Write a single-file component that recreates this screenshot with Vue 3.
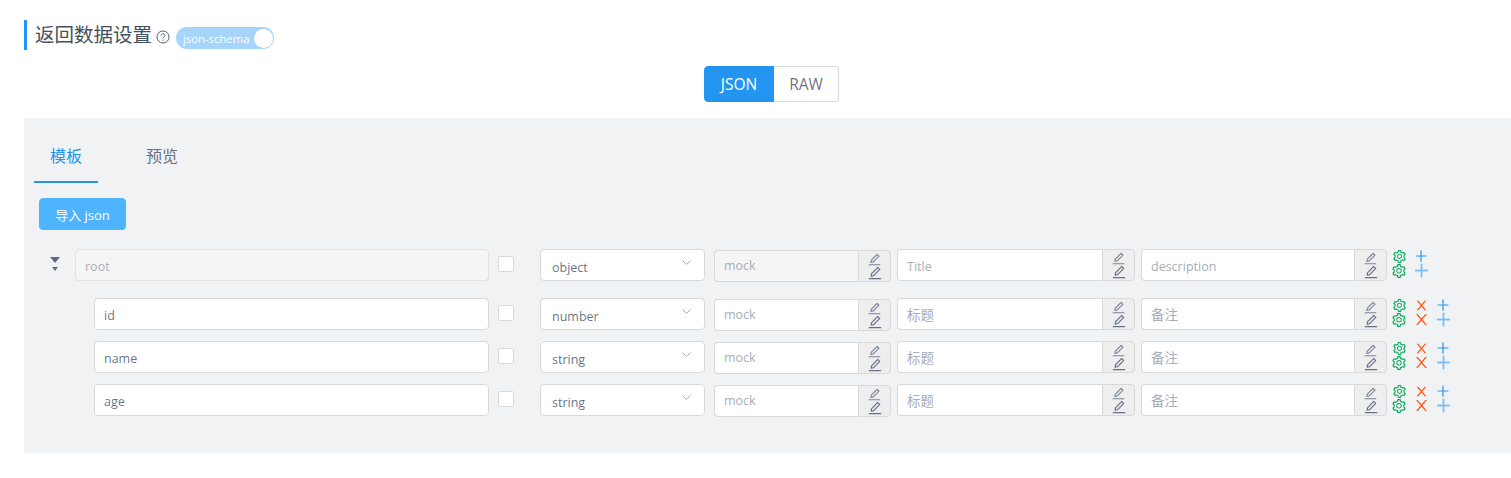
<script setup>
const EDIT = 'M257.7 752c2 0 4-.2 6-.5L431.9 722c2-.4 3.9-1.3 5.3-2.8l423.9-423.9a9.96 9.96 0 0 0 0-14.1L694.9 114.9c-1.9-1.9-4.4-2.9-7.1-2.9s-5.2 1-7.1 2.9L256.8 538.8c-1.5 1.5-2.4 3.3-2.8 5.3l-29.5 168.2a33.5 33.5 0 0 0 9.4 29.8c6.6 6.4 14.9 9.9 23.8 9.9zm67.4-174.4L687.8 215l73.3 73.3-362.7 362.6-88.9 15.7 15.6-89zM880 836H144c-17.7 0-32 14.3-32 32v36c0 4.4 3.6 8 8 8h784c4.4 0 8-3.6 8-8v-36c0-17.7-14.3-32-32-32z';
const GEAR = 'M924.8 625.7l-65.5-56c3.1-19 4.7-38.4 4.7-57.8s-1.6-38.8-4.7-57.8l65.5-56a32.03 32.03 0 0 0 9.3-35.2l-.9-2.6a443.74 443.74 0 0 0-79.7-137.9l-1.8-2.1a32.12 32.12 0 0 0-35.1-9.5l-81.3 28.9c-30-24.6-63.5-44-99.7-57.6l-15.7-85a32.05 32.05 0 0 0-25.8-25.7l-2.7-.5c-52.1-9.4-106.9-9.4-159 0l-2.7.5a32.05 32.05 0 0 0-25.8 25.7l-15.8 85.4a351.86 351.86 0 0 0-99 57.4l-81.9-29.1a32 32 0 0 0-35.1 9.5l-1.8 2.1a446.02 446.02 0 0 0-79.7 137.9l-.9 2.6c-4.5 12.5-.8 26.5 9.3 35.2l66.3 56.6c-3.1 18.8-4.6 38-4.6 57.1 0 19.2 1.5 38.4 4.6 57.1L99 625.5a32.03 32.03 0 0 0-9.3 35.2l.9 2.6c18.1 50.4 44.9 96.9 79.7 137.9l1.8 2.1a32.12 32.12 0 0 0 35.1 9.5l81.9-29.1c29.8 24.5 63.1 43.9 99 57.4l15.8 85.4a32.05 32.05 0 0 0 25.8 25.7l2.7.5a449.4 449.4 0 0 0 159 0l2.7-.5a32.05 32.05 0 0 0 25.8-25.7l15.7-85a350 350 0 0 0 99.7-57.6l81.3 28.9a32 32 0 0 0 35.1-9.5l1.8-2.1c34.8-41.1 61.6-87.5 79.7-137.9l.9-2.6c4.5-12.3.8-26.3-9.3-35zM788.3 465.9c2.5 15.1 3.8 30.6 3.8 46.1s-1.3 31-3.8 46.1l-6.6 40.1 74.7 63.9a370.03 370.03 0 0 1-42.6 73.6L721 702.8l-31.4 25.8c-23.9 19.6-50.5 35-79.3 45.8l-38.1 14.3-17.9 97a377.5 377.5 0 0 1-85 0l-17.9-97.2-37.8-14.5c-28.5-10.8-55-26.2-78.7-45.7l-31.4-25.9-93.4 33.2c-17-22.9-31.2-47.6-42.6-73.6l75.5-64.5-6.5-40c-2.4-14.9-3.7-30.3-3.7-45.5 0-15.3 1.2-30.6 3.7-45.5l6.5-40-75.5-64.5c11.3-26.1 25.6-50.7 42.6-73.6l93.4 33.2 31.4-25.9c23.7-19.5 50.2-34.9 78.7-45.7l37.9-14.3 17.9-97.2c28.1-3.2 56.8-3.2 85 0l17.9 97 38.1 14.3c28.7 10.8 55.4 26.2 79.3 45.8l31.4 25.8 92.8-32.9c17 22.9 31.2 47.6 42.6 73.6L781.8 426l6.5 39.9zM512 326c-97.2 0-176 78.8-176 176s78.8 176 176 176 176-78.8 176-176-78.8-176-176-176zm79.2 255.2A111.6 111.6 0 0 1 512 614c-29.9 0-58-11.7-79.2-32.8A111.6 111.6 0 0 1 400 502c0-29.9 11.7-58 32.8-79.2C454 401.6 482.1 390 512 390c29.9 0 58 11.6 79.2 32.8A111.6 111.6 0 0 1 624 502c0 29.9-11.7 58-32.8 79.2z';
const PLUS = 'M482 152h60q8 0 8 8v704q0 8-8 8h-60q-8 0-8-8V160q0-8 8-8ZM176 474h672q8 0 8 8v60q0 8-8 8H176q-8 0-8-8v-60q0-8 8-8Z';
const CLOSE = 'M563.8 512l262.5-312.9c4.4-5.2.7-13.1-6.1-13.1h-79.8c-4.7 0-9.2 2.1-12.3 5.7L511.6 449.8 295.1 191.7c-3-3.6-7.5-5.7-12.3-5.7H203c-6.8 0-10.5 7.9-6.1 13.1L459.4 512 196.9 824.9A7.95 7.95 0 0 0 203 838h79.8c4.7 0 9.2-2.1 12.3-5.7l216.5-258.1 216.5 258.1c3 3.6 7.5 5.7 12.3 5.7h79.8c6.8 0 10.5-7.9 6.1-13.1L563.8 512z';

const rows = [
  { name: 'id', type: 'number' },
  { name: 'name', type: 'string' },
  { name: 'age', type: 'string' },
];
</script>

<template>
  <div class="page">
    <div class="heading">
      <span class="heading-text">返回数据设置</span>
      <svg class="help" viewBox="0 0 1024 1024" fill="none" stroke="#4d5d6e">
        <circle cx="512" cy="512" r="440" stroke-width="72" />
        <path d="M370 410c0-80 64-130 142-130s142 50 142 126c0 60-40 88-82 116-34 22-60 44-60 92" stroke-width="72" />
        <circle cx="512" cy="738" r="48" fill="#4d5d6e" stroke="none" />
      </svg>
      <div class="switch">
        <span class="switch-label">json-schema</span>
        <span class="switch-knob"></span>
      </div>
    </div>

    <div class="mode-row">
      <div class="mode-group">
        <span class="mode-btn active">JSON</span>
        <span class="mode-btn">RAW</span>
      </div>
    </div>

    <div class="panel">
      <div class="tabs">
        <div class="tab active">模板</div>
        <div class="tab">预览</div>
      </div>
      <button class="import-btn" type="button">导入 json</button>

      <div class="row root-row">
        <div class="name-col root-name">
          <span class="caret">
            <i class="caret-big"></i>
            <i class="caret-small"></i>
          </span>
          <input class="text-input disabled root-input" value="root" disabled />
        </div>
        <div class="check-col"><span class="check"></span></div>
        <div class="select">
          <span>object</span>
          <svg class="chev" viewBox="0 0 10 6"><path d="M.5.5 5 5 9.500.5" /></svg>
        </div>
        <div class="group mock disabled-group">
          <input class="group-input" placeholder="mock" disabled />
          <span class="addon">
            <svg class="pen-a" viewBox="0 0 1024 1024"><path :d="EDIT" /></svg>
            <svg class="pen-b" viewBox="0 0 1024 1024"><path :d="EDIT" /></svg>
          </span>
        </div>
        <div class="group title">
          <input class="group-input" placeholder="Title" />
          <span class="addon">
            <svg class="pen-a" viewBox="0 0 1024 1024"><path :d="EDIT" /></svg>
            <svg class="pen-b" viewBox="0 0 1024 1024"><path :d="EDIT" /></svg>
          </span>
        </div>
        <div class="group desc">
          <input class="group-input" placeholder="description" />
          <span class="addon">
            <svg class="pen-a" viewBox="0 0 1024 1024"><path :d="EDIT" /></svg>
            <svg class="pen-b" viewBox="0 0 1024 1024"><path :d="EDIT" /></svg>
          </span>
        </div>
        <div class="actions">
          <span class="stack gear">
            <svg viewBox="0 0 1024 1024"><path :d="GEAR" /></svg>
            <svg viewBox="0 0 1024 1024"><path :d="GEAR" /></svg>
          </span>
          <span class="stack plus">
            <svg viewBox="0 0 1024 1024"><path :d="PLUS" /></svg>
            <svg viewBox="0 0 1024 1024"><path :d="PLUS" /></svg>
          </span>
        </div>
      </div>

      <div v-for="r in rows" :key="r.name" class="row child-row">
        <div class="name-col child-name">
          <input class="text-input" :value="r.name" />
        </div>
        <div class="check-col"><span class="check"></span></div>
        <div class="select">
          <span>{{ r.type }}</span>
          <svg class="chev" viewBox="0 0 10 6"><path d="M.5.5 5 5 9.500.5" /></svg>
        </div>
        <div class="group mock">
          <input class="group-input" placeholder="mock" />
          <span class="addon">
            <svg class="pen-a" viewBox="0 0 1024 1024"><path :d="EDIT" /></svg>
            <svg class="pen-b" viewBox="0 0 1024 1024"><path :d="EDIT" /></svg>
          </span>
        </div>
        <div class="group title">
          <input class="group-input cjk" placeholder="标题" />
          <span class="addon">
            <svg class="pen-a" viewBox="0 0 1024 1024"><path :d="EDIT" /></svg>
            <svg class="pen-b" viewBox="0 0 1024 1024"><path :d="EDIT" /></svg>
          </span>
        </div>
        <div class="group desc">
          <input class="group-input cjk" placeholder="备注" />
          <span class="addon">
            <svg class="pen-a" viewBox="0 0 1024 1024"><path :d="EDIT" /></svg>
            <svg class="pen-b" viewBox="0 0 1024 1024"><path :d="EDIT" /></svg>
          </span>
        </div>
        <div class="actions">
          <span class="stack gear">
            <svg viewBox="0 0 1024 1024"><path :d="GEAR" /></svg>
            <svg viewBox="0 0 1024 1024"><path :d="GEAR" /></svg>
          </span>
          <span class="stack close">
            <svg viewBox="0 0 1024 1024"><path :d="CLOSE" /></svg>
            <svg viewBox="0 0 1024 1024"><path :d="CLOSE" /></svg>
          </span>
          <span class="stack plus">
            <svg viewBox="0 0 1024 1024"><path :d="PLUS" /></svg>
            <svg viewBox="0 0 1024 1024"><path :d="PLUS" /></svg>
          </span>
        </div>
      </div>
    </div>
  </div>
</template>

<style scoped>
.page {
  height: 478px;
  padding: 20px 0 0 24px;
  box-sizing: border-box;
  background: #fff;
  font-family: "Open Sans", "Noto Sans CJK SC", sans-serif;
  color: rgba(13, 27, 62, 0.65);
  overflow: hidden;
}

.heading {
  display: flex;
  align-items: center;
  height: 30px;
  border-left: 3px solid #2395f1;
  padding-left: 8px;
}
.heading-text {
  font-size: 19.5px;
  color: #44505c;
  line-height: 30px;
}
.help {
  width: 14px;
  height: 14px;
  margin: 4px 6px 0 4px;
}
.switch {
  width: 98px;
  height: 22px;
  margin-top: 6px;
  border-radius: 11px;
  background: #a6d4fa;
  display: flex;
  align-items: center;
  justify-content: space-between;
  padding: 0 1px 0 7px;
  box-sizing: border-box;
}
.switch-label {
  font-size: 11.3px;
  color: #fff;
}
.switch-knob {
  width: 19px;
  height: 19px;
  border-radius: 50%;
  background: #fff;
}

.mode-row {
  display: flex;
  justify-content: center;
  margin-top: 16px;
  padding-right: 16px;
  margin-left: 24px;
}
.mode-group {
  display: flex;
  height: 36px;
}
.mode-btn {
  display: flex;
  align-items: center;
  justify-content: center;
  width: 65px;
  border: 1px solid #d9d9d9;
  border-left: 0;
  border-radius: 0 4px 4px 0;
  box-sizing: border-box;
  font-size: 15.5px;
  color: rgba(13, 27, 62, 0.65);
}
.mode-btn.active {
  width: 70px;
  background: #2395f1;
  border: 1px solid #2395f1;
  border-radius: 4px 0 0 4px;
  color: #fff;
}

.panel {
  margin-top: 16px;
  height: 335px;
  background: #f1f2f4;
  padding-left: 10px;
  box-sizing: border-box;
}
.tabs {
  display: flex;
  gap: 32px;
  padding-top: 16px;
}
.tab {
  width: 64px;
  height: 49px;
  line-height: 45px;
  text-align: center;
  font-size: 16px;
  color: rgba(13, 27, 62, 0.65);
  box-sizing: border-box;
}
.tab.active {
  color: #2395f1;
  border-bottom: 2px solid #2395f1;
}
.import-btn {
  display: block;
  width: 87px;
  height: 32px;
  margin: 15px 0 0 5px;
  padding: 0;
  border: 1px solid #4eb4ff;
  border-radius: 4px;
  background: #4eb4ff;
  color: #fff;
  font-family: inherit;
  font-size: 13px;
}

.row {
  display: flex;
  align-items: flex-start;
  height: 32px;
}
.root-row {
  margin-top: 19px;
  margin-bottom: 17px;
}
.child-row {
  margin-bottom: 11px;
}
.name-col {
  width: 455px;
  display: flex;
  align-items: center;
  box-sizing: border-box;
}
.root-name {
  padding-left: 16px;
}
.child-name {
  padding-left: 60px;
}
.caret {
  width: 25px;
  display: flex;
  flex-direction: column;
  gap: 4px;
  flex: none;
  margin-top: -2px;
}
.caret i {
  display: block;
  width: 0;
  height: 0;
  border-style: solid;
  border-color: #5c6b85 transparent transparent;
}
.caret-big {
  border-width: 6px 5px 0;
}
.caret-small {
  border-width: 4px 3px 0;
  margin-left: 2px;
}

.text-input,
.group-input {
  min-width: 0;
  width: 100%;
  height: 32px;
  box-sizing: border-box;
  border: 1px solid #d9d9d9;
  border-radius: 4px;
  background: #fff;
  padding: 2px 9px 0;
  font-family: inherit;
  font-size: 12.5px;
  color: rgba(13, 27, 62, 0.65);
  outline: none;
}
.text-input.disabled {
  background: #f5f5f5;
  color: rgba(39, 56, 72, 0.4);
}
.root-input {
  border-color: #e8dfdf;
}
.group-input::placeholder {
  color: #a9adb8;
  opacity: 1;
}
.group-input.cjk {
  font-size: 13.5px;
}
.mock .group-input {
  padding: 0 9px 2px;
}

.check-col {
  width: 51px;
  display: flex;
  padding: 7px 0 0 9px;
  box-sizing: border-box;
}
.check {
  width: 16px;
  height: 16px;
  box-sizing: border-box;
  border: 1px solid #d9d9d9;
  border-radius: 2px;
  background: #fff;
}

.select {
  width: 165px;
  height: 32px;
  display: flex;
  align-items: center;
  justify-content: space-between;
  box-sizing: border-box;
  border: 1px solid #d9d9d9;
  border-radius: 4px;
  background: #fff;
  padding: 5px 13px 0 11px;
  font-size: 12.5px;
  color: rgba(13, 27, 62, 0.65);
}
.chev {
  width: 9px;
  height: 5.4px;
  margin-top: -9px;
  fill: none;
  stroke: #9aa1ad;
  stroke-width: 1;
}

.group {
  display: flex;
  height: 32px;
  box-sizing: border-box;
}
.group-input {
  flex: 1;
  border-right: 0;
  border-radius: 4px 0 0 4px;
}
.mock {
  width: 177px;
  margin: 1px 0 0 9px;
}
.title {
  width: 238px;
  margin-left: 6px;
}
.desc {
  width: 246px;
  margin-left: 6px;
}
.disabled-group .group-input {
  background: #f5f5f5;
}
.addon {
  flex: none;
  width: 33px;
  box-sizing: border-box;
  border: 1px solid #d9d9d9;
  border-radius: 0 4px 4px 0;
  background: #eee;
  display: flex;
  flex-direction: column;
  align-items: center;
  padding-top: 1px;
}
.addon svg {
  display: block;
  flex: none;
  fill: #666f85;
}
.pen-a {
  width: 15px;
  height: 15px;
}
.addon .pen-a {
  fill: #7a8296;
}
.pen-b {
  width: 16px;
  height: 16px;
  margin-top: -2px;
}

.actions {
  display: flex;
  margin-left: 4px;
}
.stack {
  display: flex;
  flex-direction: column;
  align-items: center;
}
.stack svg {
  display: block;
  flex: none;
}
.gear {
  width: 16px;
  fill: #00a854;
}
.gear svg:first-child {
  width: 15px;
  height: 15px;
}
.gear svg:last-child {
  width: 16px;
  height: 16px;
  margin-top: -1px;
}
.close {
  width: 14px;
  margin-left: 7px;
  fill: #ff561b;
}
.close svg:first-child {
  width: 15px;
  height: 15px;
}
.close svg:last-child {
  width: 17px;
  height: 17px;
  margin-top: -2px;
}
.plus {
  width: 14px;
  margin-left: 7px;
  fill: #2395f1;
}
.plus svg:first-child {
  width: 16px;
  height: 16px;
  margin-top: -1px;
}
.plus svg:last-child {
  width: 19px;
  height: 19px;
  margin-top: -3px;
  fill: #7cc0f7;
  stroke: #7cc0f7;
  stroke-width: 16;
}
.close + .plus {
  margin-left: 8px;
}
</style>
